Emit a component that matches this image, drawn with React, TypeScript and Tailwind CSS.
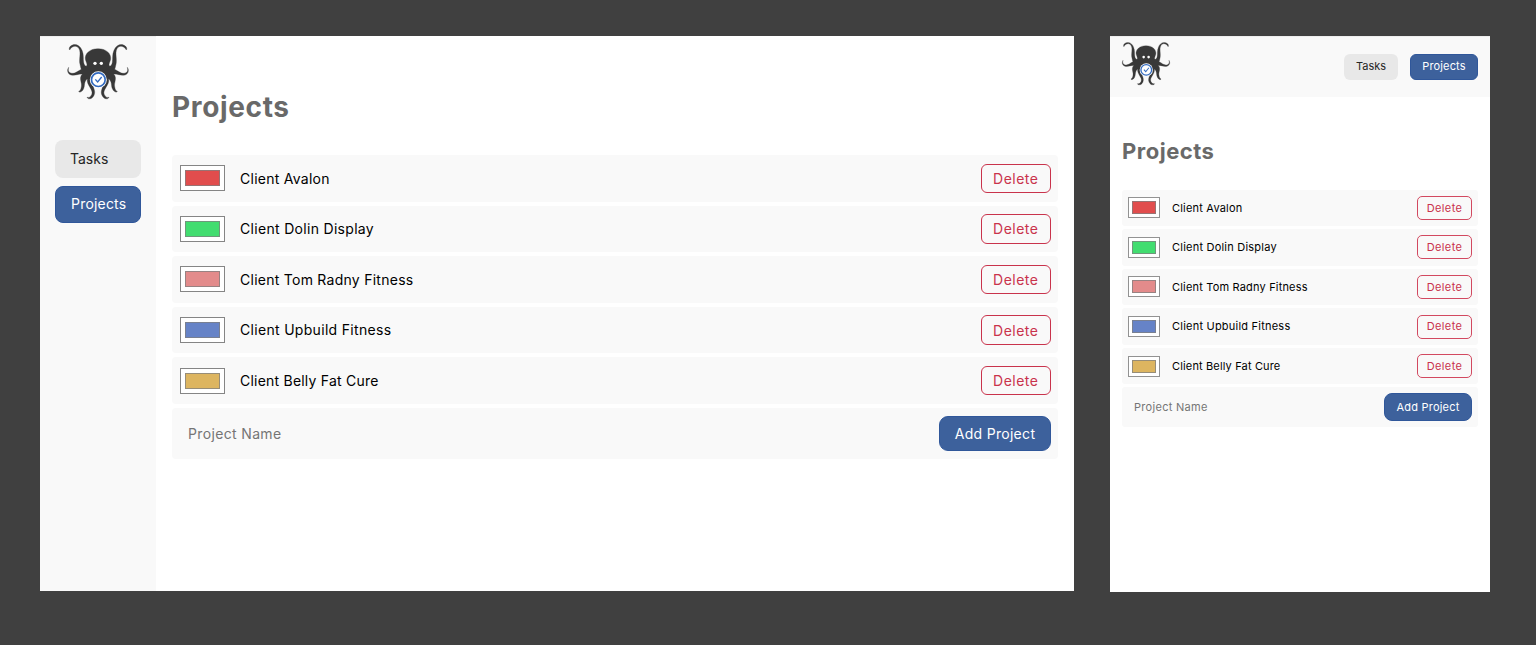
const projects = [
  { name: "Client Avalon", color: "bg-[#e14d4d]", wide: "tracking-[0.26px]", narrow: "tracking-[0.2px]" },
  { name: "Client Dolin Display", color: "bg-[#42dd70]", wide: "tracking-[0.31px]", narrow: "tracking-[0.22px]" },
  { name: "Client Tom Radny Fitness", color: "bg-[#e38b8b]", wide: "tracking-[0.26px]", narrow: "tracking-[0.18px]" },
  { name: "Client Upbuild Fitness", color: "bg-[#6683c7]", wide: "tracking-[0.31px]", narrow: "tracking-[0.22px]" },
  { name: "Client Belly Fat Cure", color: "bg-[#ddb560]", wide: "tracking-[0.22px]", narrow: "tracking-[0.15px]" },
];

function Logo({ className }: { className: string }) {
  return (
    <svg viewBox="24 21 192 171" className={className} aria-hidden="true">
      <g fill="#383838" stroke="#383838" strokeWidth="1" strokeLinejoin="round">
        <path d="M120 38C95 38 80 53 82 70C84 79 89 85 86 90C82 92 78 86 77 79C75 68 78 57 72 43C65 25 48 21 37 31C33 35 33 40 35 42C41 30 56 26 63 38C70 50 62 70 66 85C68 93 68 96 70 100C56 107 49 115 38 111C30 108 30 102 32 94C26 103 29 114 39 117C53 120 60 113 73 114C61 127 73 139 70 152C69 160 66 165 62 166C64 171 72 168 76 160C82 149 76 139 88 128C84 147 108 161 101 176C97 184 92 185 87 184C90 191 101 190 107 180C115 167 105 155 104 145L120 150L136 145C135 155 125 167 133 180C139 190 150 191 153 184C148 185 143 184 139 176C132 161 156 147 152 128C164 139 158 149 164 160C168 168 176 171 178 166C174 165 171 160 170 152C167 139 179 127 167 114C180 113 187 120 201 117C211 114 214 103 208 94C210 102 210 108 202 111C191 115 184 107 170 100C172 96 172 93 174 85C178 70 170 50 177 38C184 26 199 30 205 42C207 40 207 35 203 31C192 21 175 25 168 43C162 57 165 68 163 79C162 86 158 92 154 90C151 85 156 79 158 70C160 53 145 38 120 38Z" />
      </g>
      <circle cx="111" cy="82" r="5" fill="#fff" />
      <circle cx="130" cy="82" r="5" fill="#fff" />
      <circle cx="121" cy="131" r="25.5" fill="#fff" />
      <circle cx="121" cy="131" r="20.5" fill="#fff" stroke="#326abf" strokeWidth="5" />
      <path d="M112 130L119 138L131 123" fill="none" stroke="#326abf" strokeWidth="4" />
    </svg>
  );
}

function DesktopView() {
  return (
    <section className="flex h-[555px] w-[1034px] bg-white text-[14px]">
      <aside className="flex w-[116px] shrink-0 flex-col border-t border-[#eeeeee] bg-[#f9f9f9] px-[15px] pt-[6px]">
        <Logo className="ml-[11px] h-[57px] w-[64px] shrink-0" />
        <nav className="mt-[40px] flex flex-col gap-2">
          <button className="h-[38px] rounded-[8px] bg-[#e8e8e8] pb-[2px] pl-[15px] text-left tracking-[0px] text-[#252525]">Tasks</button>
          <button className="h-[37px] rounded-[8px] border border-[#30579a] bg-[#3d619c] pb-[3px] pl-[15px] text-left tracking-[0.2px] text-white">Projects</button>
        </nav>
      </aside>
      <main className="flex-1 px-4 pt-[52px]">
        <h1 className="h-[67px] text-[28px] leading-[38px] font-bold tracking-[0.65px] text-[#696969]">Projects</h1>
        <ul className="flex flex-col gap-1">
          {projects.map((project) => (
            <li key={project.name} className="flex h-[46.6px] items-center rounded-[4px] bg-[#f9f9f9] pr-[7px] pl-2">
              <span className="h-[26px] w-[45px] shrink-0 border border-[#858585] bg-white p-[4px]">
                <span className={`block h-full border border-[#808080c0] ${project.color}`} />
              </span>
              <span className={`ml-[15px] flex-1 pb-[0.5px] text-black ${project.wide}`}>{project.name}</span>
              <button className="h-[29.5px] w-[70.5px] rounded-[6px] border border-[#c9334c] tracking-[0.5px] text-[#c9334c]">Delete</button>
            </li>
          ))}
          <li className="flex h-[50.6px] items-center justify-between rounded-[4px] bg-[#f9f9f9] pr-[7px] pl-4">
            <span className="tracking-[0.35px] text-[#757575]">Project Name</span>
            <button className="h-[35px] w-[112px] rounded-[9px] border border-[#30579a] bg-[#3d619c] tracking-[0.3px] text-white">Add Project</button>
          </li>
        </ul>
      </main>
    </section>
  );
}

function MobileView() {
  return (
    <section className="flex h-[556px] w-[380px] flex-col bg-white text-[11px]">
      <header className="flex h-[61px] shrink-0 items-center border-t border-[#eeeeee] bg-[#f9f9f9] pr-3 pl-[11px]">
        <Logo className="mb-[7px] h-[45px] w-[50px]" />
        <nav className="mb-px ml-auto flex gap-3">
          <button className="h-[26px] w-[54px] rounded-[6px] bg-[#e8e8e8] pb-px tracking-[0px] text-[#252525]">Tasks</button>
          <button className="h-[26px] w-[68px] rounded-[6px] border border-[#30579a] bg-[#3d619c] pb-px tracking-[0.15px] text-white">Projects</button>
        </nav>
      </header>
      <main className="px-3 pt-[39px]">
        <h1 className="h-[53.5px] text-[22px] leading-[30px] font-bold tracking-[0.5px] text-[#696969]">Projects</h1>
        <ul className="flex flex-col gap-[3.1px]">
          {projects.map((project) => (
            <li key={project.name} className="flex h-[36.5px] items-center rounded-[3px] bg-[#f9f9f9] px-[6px]">
              <span className="h-[21px] w-[32px] shrink-0 border border-[#929292] bg-white p-[3px]">
                <span className={`block h-full border border-[#808080c0] ${project.color}`} />
              </span>
              <span className={`ml-3 flex-1 text-black ${project.narrow}`}>{project.name}</span>
              <button className="h-[24px] w-[55px] rounded-[5px] border border-[#d24960] tracking-[0.4px] text-[#c9334c]">Delete</button>
            </li>
          ))}
          <li className="flex h-[39.5px] items-center justify-between rounded-[3px] bg-[#f9f9f9] pr-[6px] pl-3">
            <span className="tracking-[0.3px] text-[#757575]">Project Name</span>
            <button className="h-[28px] w-[88px] rounded-[8px] border border-[#30579a] bg-[#3d619c] tracking-[0.2px] text-white">Add Project</button>
          </li>
        </ul>
      </main>
    </section>
  );
}

export default function App() {
  return (
    <div className="flex h-[645px] w-[1536px] items-start gap-9 overflow-hidden bg-[#404040] pt-9 pl-10 font-['Inter',sans-serif] font-normal">
      <DesktopView />
      <MobileView />
    </div>
  );
}
